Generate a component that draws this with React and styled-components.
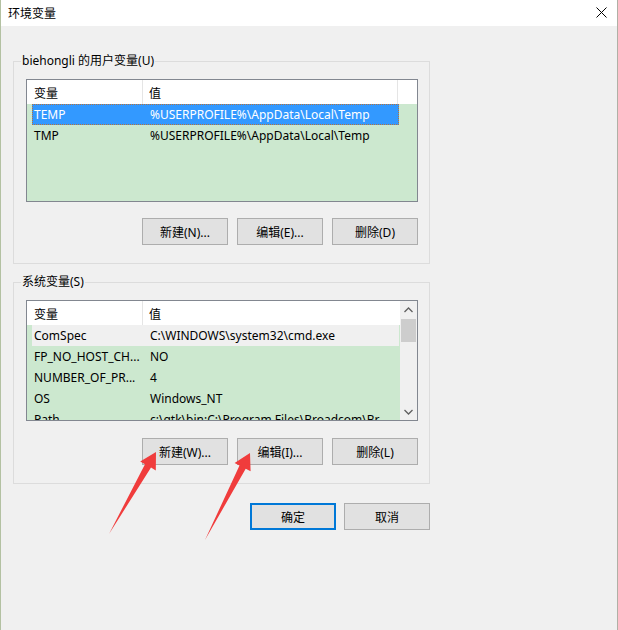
import styled, { createGlobalStyle } from "styled-components";

const GlobalStyle = createGlobalStyle`
  html, body {
    margin: 0;
    padding: 0;
    background: #f0f0f0;
  }
  body {
    font-family: "Noto Sans", "Noto Sans CJK SC", sans-serif;
    font-size: 12px;
    color: #000;
  }
`;

const Window = styled.div`
  position: relative;
  width: 618px;
  height: 630px;
  box-sizing: border-box;
  border-left: 1px solid #b3c1a2;
  border-right: 1px solid #b0b0a6;
  background: #f0f0f0;
  overflow: hidden;
`;

const TitleBar = styled.div`
  height: 26px;
  background: #fff;
  display: flex;
  align-items: center;
  justify-content: space-between;
  padding: 0 10px 2px 7px;
  box-sizing: border-box;
  font-family: "Noto Sans CJK SC", sans-serif;
  font-size: 12px;
`;

const Body = styled.div`
  padding: 27px 12px 0 12px;
  width: 417px;
`;

const Group = styled.fieldset`
  margin: 0 0 ${(p) => p.$gap || 0}px 0;
  padding: 0;
  min-width: 0;
  border: 1px solid #dcdcdc;
`;

const Legend = styled.legend`
  margin-left: 7px;
  padding: 0 1px;
  line-height: 16px;
  font-size: 12px;
`;

const GroupInner = styled.div`
  padding: ${(p) => p.$top}px 11px 18px 12px;
`;

const ListView = styled.div`
  display: flex;
  height: ${(p) => p.$h}px;
  box-sizing: border-box;
  border: 1px solid #828790;
  background: #cce8cf;
  overflow: hidden;
`;

const ListMain = styled.div`
  flex: 1;
  min-width: 0;
  overflow: hidden;
`;

const Header = styled.div`
  display: grid;
  grid-template-columns: 116px 255px 1fr;
  height: 24px;
  background: #fff;
`;

const HeadCell = styled.div`
  display: flex;
  align-items: center;
  padding-left: ${(p) => p.$pad}px;
  border-right: ${(p) => (p.$last ? "none" : "1px solid #e5e5e5")};
  font-family: "Noto Sans CJK SC", sans-serif;
`;

const Row = styled.div`
  display: grid;
  grid-template-columns: 111px 256px;
  width: 367px;
  height: 21px;
  margin-left: 5px;
  box-sizing: border-box;
  align-items: center;
  background: ${(p) => (p.$selected ? "#3399ff" : p.$hot ? "#f0f0f0" : "transparent")};
  color: ${(p) => (p.$selected ? "#fff" : "#000")};
  outline: ${(p) => (p.$selected ? "1px dotted #b8733a" : "none")};
  outline-offset: -1px;
`;

const Cell = styled.div`
  padding-left: ${(p) => p.$pad}px;
  white-space: nowrap;
  overflow: hidden;
`;

const ScrollBar = styled.div`
  width: 17px;
  display: flex;
  flex-direction: column;
  background: #f0f0f0;
`;

const ScrollArrow = styled.div`
  height: 17px;
  display: flex;
  align-items: center;
  justify-content: center;
`;

const ScrollTrack = styled.div`
  flex: 1;
  padding: 1px 1px 0 1px;
`;

const Thumb = styled.div`
  height: 23px;
  background: #cdcdcd;
`;

const ButtonRow = styled.div`
  display: flex;
  justify-content: flex-end;
  gap: ${(p) => p.$gap || 9}px;
  margin-top: ${(p) => p.$top || 0}px;
`;

const Button = styled.button`
  width: 86px;
  height: 27px;
  box-sizing: border-box;
  border: ${(p) => (p.$default ? "2px solid #0078d7" : "1px solid #adadad")};
  background: #e1e1e1;
  font-family: "Noto Sans", "Noto Sans CJK SC", sans-serif;
  font-size: 12px;
  color: #000;
  padding: 0;
`;

const Arrows = styled.svg`
  position: absolute;
  left: 0;
  top: 0;
  pointer-events: none;
`;

const Chevron = ({ up }) => (
  <svg width="9" height="6" viewBox="0 0 9 6">
    <polyline
      points={up ? "0.5,5 4.5,1 8.5,5" : "0.5,1 4.5,5 8.5,1"}
      fill="none"
      stroke="#606060"
      strokeWidth="1.3"
    />
  </svg>
);

const userVars = [
  ["TEMP", "%USERPROFILE%\\AppData\\Local\\Temp"],
  ["TMP", "%USERPROFILE%\\AppData\\Local\\Temp"],
];

const sysVars = [
  ["ComSpec", "C:\\WINDOWS\\system32\\cmd.exe"],
  ["FP_NO_HOST_CH...", "NO"],
  ["NUMBER_OF_PR...", "4"],
  ["OS", "Windows_NT"],
  ["Path", "c:\\gtk\\bin;C:\\Program Files\\Broadcom\\Br"],
];

const VarList = ({ rows, height, selected, hot, scroll }) => (
  <ListView $h={height}>
    <ListMain>
      <Header>
        <HeadCell $pad={7}>变量</HeadCell>
        <HeadCell $pad={6} $last={scroll}>值</HeadCell>
        {!scroll && <HeadCell $last />}
      </Header>
      {rows.map(([k, v], i) => (
        <Row key={k} $selected={i === selected} $hot={i === hot}>
          <Cell $pad={2}>{k}</Cell>
          <Cell $pad={7}>{v}</Cell>
        </Row>
      ))}
    </ListMain>
    {scroll && (
      <ScrollBar>
        <ScrollArrow>
          <Chevron up />
        </ScrollArrow>
        <ScrollTrack>
          <Thumb />
        </ScrollTrack>
        <ScrollArrow>
          <Chevron />
        </ScrollArrow>
      </ScrollBar>
    )}
  </ListView>
);

export default function App() {
  return (
    <>
      <GlobalStyle />
      <Window>
        <TitleBar>
          <span>环境变量</span>
          <svg width="11" height="11" viewBox="0 0 11 11">
            <path d="M0.5 0.5 L10.5 10.5 M10.5 0.5 L0.5 10.5" stroke="#000" strokeWidth="1" />
          </svg>
        </TitleBar>
        <Body>
          <Group $gap={10}>
            <Legend>biehongli 的用户变量(U)</Legend>
            <GroupInner $top={10}>
              <VarList rows={userVars} height={123} selected={0} />
              <ButtonRow $top={16}>
                <Button>新建(N)...</Button>
                <Button>编辑(E)...</Button>
                <Button>删除(D)</Button>
              </ButtonRow>
            </GroupInner>
          </Group>
          <Group $gap={19}>
            <Legend>系统变量(S)</Legend>
            <GroupInner $top={10}>
              <VarList rows={sysVars} height={121} hot={0} scroll />
              <ButtonRow $top={17}>
                <Button>新建(W)...</Button>
                <Button>编辑(I)...</Button>
                <Button>删除(L)</Button>
              </ButtonRow>
            </GroupInner>
          </Group>
          <ButtonRow $gap={8}>
            <Button $default>确定</Button>
            <Button>取消</Button>
          </ButtonRow>
        </Body>
        <Arrows width="618" height="630" viewBox="0 0 618 630">
          <polygon
            points="108,534 144,464.2 139.2,461.4 155,452 154.8,470.4 150,467.6"
            fill="#f03c3c"
          />
          <polygon
            points="204,540 238.5,465.6 233.6,463.1 249,453 249.6,471.3 244.7,468.8"
            fill="#f03c3c"
          />
        </Arrows>
      </Window>
    </>
  );
}
